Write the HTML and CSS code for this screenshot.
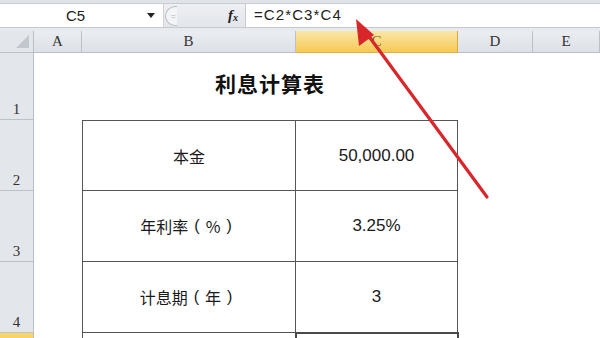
FILE: index.html
```html
<!DOCTYPE html>
<html>
<head>
<meta charset="utf-8">
<link rel="stylesheet" href="styles.css">
</head>
<body>
<div class="app">
  <div class="topstrip"></div>
  <div class="fbar">
    <div class="namebox"><span class="nb-text">C5</span><span class="dd"></span></div>
    <div class="mid">
      <span class="knob"><span class="knob-mark">=</span></span>
      <span class="fx">f<sub>x</sub></span>
    </div>
    <div class="formula">=C2*C3*C4</div>
  </div>
  <div class="gap"></div>
  <div class="sheet">
    <div class="corner"><span class="tri"></span></div>
    <div class="ch">A</div>
    <div class="ch">B</div>
    <div class="ch ch-sel">C</div>
    <div class="ch">D</div>
    <div class="ch">E</div>

    <div class="rh r1">1</div>
    <div class="title">利息计算表</div>

    <div class="rh r2">2</div>
    <div class="cell lab r2">本金</div>
    <div class="cell val r2">50,000.00</div>

    <div class="rh r3">3</div>
    <div class="cell lab r3">年利率<span class="p">(</span>%<span class="p">)</span></div>
    <div class="cell val r3">3.25%</div>

    <div class="rh r4">4</div>
    <div class="cell lab r4">计息期<span class="p">(</span>年<span class="p">)</span></div>
    <div class="cell val r4">3</div>

    <div class="rh rh-sel r5"></div>
    <div class="cell lab r5 last"></div>
    <div class="cell val r5 last sel"></div>
  </div>
  <svg class="arrow" width="600" height="338" viewBox="0 0 600 338">
    <line x1="487" y1="197" x2="365" y2="31" stroke="#d9262b" stroke-width="3.2" stroke-linecap="round"/>
    <polygon points="356,19 359,46 374,35" fill="#d9262b"/>
  </svg>
</div>
</body>
</html>
```

FILE: styles.css
```css
* { box-sizing: border-box; }
html, body { margin: 0; padding: 0; background: #ffffff; }
.app { position: relative; width: 600px; height: 338px; overflow: hidden; background: #ffffff; }

.topstrip { height: 4px; background: #e0e3e7; border-bottom: 1px solid #c9ccd1; }

.fbar { display: flex; height: 24px; background: #ffffff; border-bottom: 1px solid #c6cad0; }
.namebox { width: 164px; display: flex; align-items: center; position: relative; border-right: 1px solid #d0d3d8; }
.nb-text { flex: 1; text-align: center; font-family: "Liberation Sans", Arial, sans-serif; font-size: 15px; color: #222; padding-left: 4px; }
.dd { width: 0; height: 0; border-left: 4px solid transparent; border-right: 4px solid transparent; border-top: 5px solid #222; margin-right: 8px; }
.mid { width: 82px; display: flex; align-items: center; background: linear-gradient(#eef0f3, #e2e5ea); border-right: 1px solid #c6cad0; }
.knob { width: 12px; height: 20px; margin-left: 1px; border: 1px solid #b9bec6; border-right: none; border-radius: 10px 0 0 10px; background: #f3f4f6; display: flex; align-items: center; justify-content: center; }
.knob-mark { font-family: "Liberation Sans", sans-serif; font-size: 9px; color: #b3b8c0; margin-left: 4px; }
.fx { margin-left: auto; margin-right: 7px; font-family: "Liberation Serif", serif; font-style: italic; font-weight: bold; font-size: 15px; color: #222; line-height: 1; }
.fx sub { font-size: 10px; vertical-align: -1px; }
.formula { flex: 1; padding-left: 8px; padding-bottom: 2px; display: flex; align-items: center; font-family: "Liberation Sans", Arial, sans-serif; font-size: 15px; color: #222; letter-spacing: 1.1px; }

.gap { height: 3px; background: #e8eaed; }

.sheet {
  display: grid;
  grid-template-columns: 34px 48px 214px 162px 75px 67px;
  grid-template-rows: 22px 67px 71px 71px 71px 30px;
}
.corner { background: #e3e6eb; border-right: 1px solid #b9bec7; border-bottom: 1px solid #b9bec7; position: relative; }
.tri { position: absolute; right: 4px; bottom: 4px; width: 0; height: 0; border-left: 13px solid transparent; border-bottom: 13px solid #c2c6cd; }
.ch {
  background: linear-gradient(#eaedf1, #dde1e7);
  border-right: 1px solid #bcc1c9; border-bottom: 1px solid #b9bec7;
  display: flex; align-items: center; justify-content: center;
  font-family: "Liberation Serif", serif; font-size: 15px; color: #333;
}
.ch-sel { background: linear-gradient(#fbe7a8, #f5c953); border-right-color: #d8aa40; border-bottom-color: #d9b14e; color: #7a6020; }

.rh {
  grid-column: 1;
  background: #e3e6eb;
  border-right: 1px solid #b9bec7; border-bottom: 1px solid #bcc1c9;
  display: flex; align-items: flex-end; justify-content: center;
  padding-bottom: 1px;
  font-family: "Liberation Serif", serif; font-size: 15px; color: #333;
}
.rh-sel { background: linear-gradient(#f8d56f, #f4c445); border-bottom: none; }
.r1 { grid-row: 2; }
.r2 { grid-row: 3; }
.r3 { grid-row: 4; }
.r4 { grid-row: 5; }
.r5 { grid-row: 6; }

.title {
  grid-column: 3 / 5; grid-row: 2;
  display: flex; align-items: center; justify-content: center;
  padding-bottom: 8px;
  font-family: "Noto Sans CJK SC", "Liberation Sans", sans-serif; font-weight: bold; font-size: 21px; color: #111; letter-spacing: 1px;
}

.cell {
  display: flex; align-items: center; justify-content: center;
  border-bottom: 1px solid #555;
  color: #1a1a1a;
}
.lab { grid-column: 3; border-left: 1px solid #555; border-right: 1px solid #555; font-family: "Noto Sans CJK SC", sans-serif; font-size: 16px; }
.p { font-family: "Liberation Sans", sans-serif; font-size: 16px; margin: 0 6px; }
.val { grid-column: 4; border-right: 1px solid #555; font-family: "Liberation Sans", Arial, sans-serif; font-size: 17px; }
.r2.cell { border-top: 1px solid #555; }
.cell.last { border-bottom: none; }
.sel { border-top: 2px solid #4a4a4a; margin-top: -1px; margin-left: -1px; margin-right: -1px; border-left: 2px solid #4a4a4a; border-right: 2px solid #4a4a4a; }

.arrow { position: absolute; left: 0; top: 0; pointer-events: none; }
```
